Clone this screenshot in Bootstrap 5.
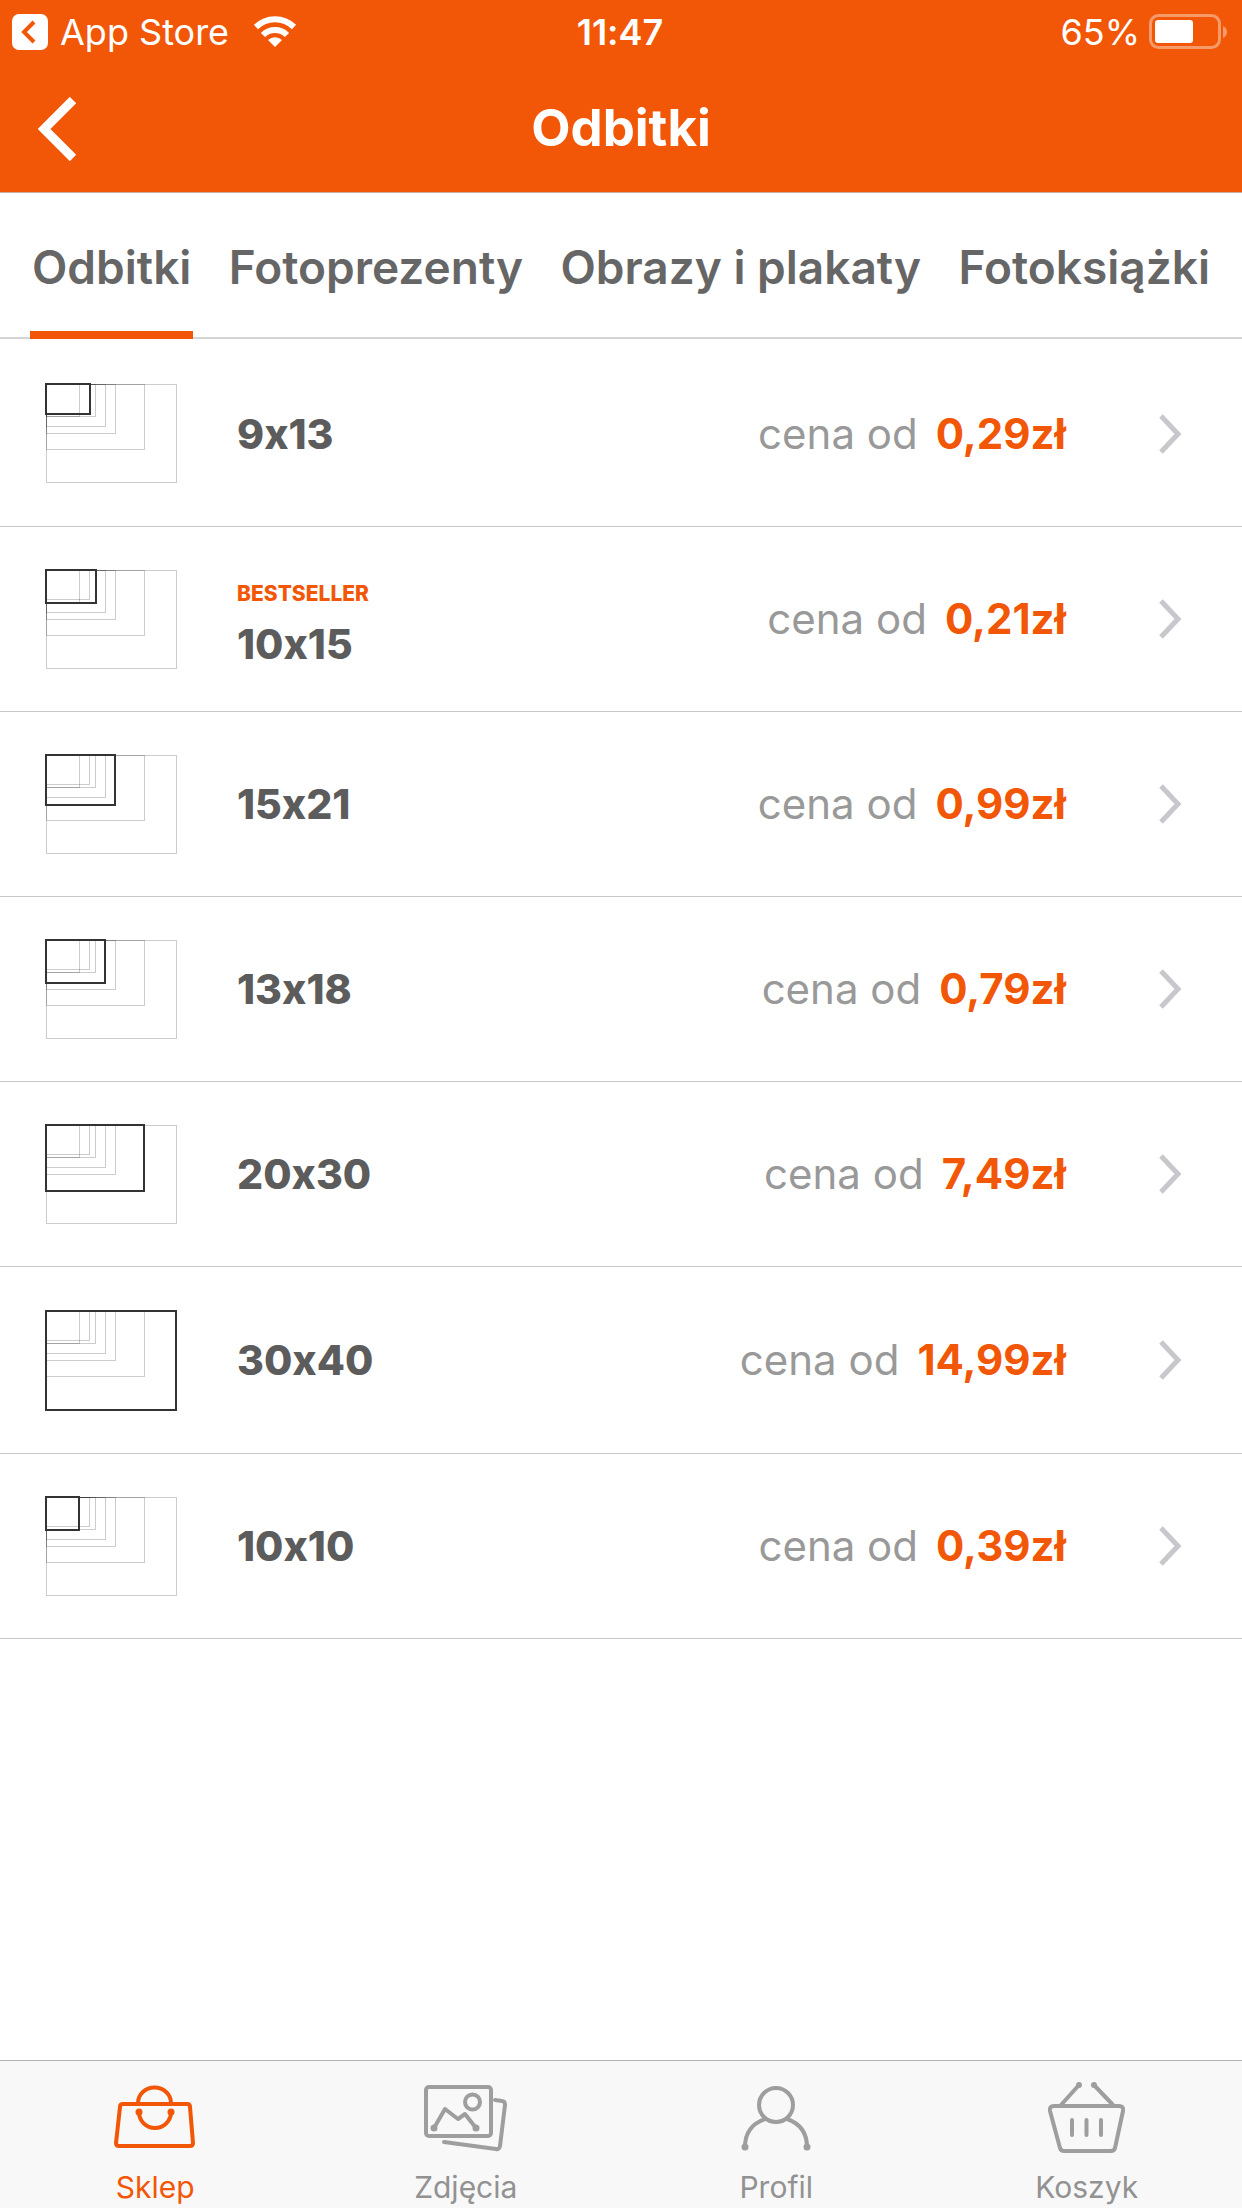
<!DOCTYPE html>
<html lang="pl">
<head>
<meta charset="utf-8">
<meta name="viewport" content="width=device-width, initial-scale=1">
<title>Odbitki</title>
<link rel="stylesheet" href="https://cdn.jsdelivr.net/npm/bootstrap@5.3.0/dist/css/bootstrap.min.css">
<style>
  :root { --brand: #f25708; --ink: #5c5c5c; --muted: #999; --rule: #c8c8c8; }
  body { font-family: Inter, "Noto Sans", sans-serif; font-variant-ligatures: no-contextual; color: var(--ink); background: #fff; }
  svg { display: block; flex: none; }
  a { text-decoration: none; }
  .app-top { background: var(--brand); border-bottom: 1px solid #c9b0a2; }
  .status-row { font-size: 36px; line-height: 64px; height: 64px; padding: 0 14px 0 12px; }
  .back-label { margin: 0 24px 0 12px; }
  .title-row { height: 128px; padding: 0 38px; }
  .title-row h1 { font-size: 51px; line-height: 60px; font-weight: 700; }
  .back-link { padding-top: 8px; }
  .side { flex: 1 1 0; }
  .tab-strip { height: 146px; padding: 0 30px; border-bottom: 2px solid #d4d4d4; }
  .tab-strip .nav-link { padding: 44px 2px 0; font-size: 46px; line-height: 60px; font-weight: 600; color: #666; height: 146px; }
  .tab-strip .nav-link.active { border-bottom: 8px solid var(--brand); }
  .size-row { height: 185px; padding: 0 60px 0 45px; border: 0; border-bottom: 1px solid var(--rule); color: var(--ink); }
  .size-row.first-row { height: 188px; padding-top: 2px; }
  .size-row.tall-row { height: 187px; }
  .size-name { font-size: 41px; line-height: 50px; font-weight: 800; padding-left: 59px; }
  .tag-line { font-size: 21px; line-height: 26px; font-weight: 800; color: var(--brand); padding: 12px 0; }
  .price-from { font-size: 42px; line-height: 50px; color: var(--muted); padding-right: 92px; gap: 18px; }
  .price-from strong { font-weight: 700; color: var(--brand); }
  .chev { color: #c7c7cc; }
  #formats rect { fill: none; stroke: #000; stroke-opacity: .2; }
  .thumb .picked { fill: none; stroke: #333; stroke-width: 2; }
  .dock { background: #f8f8f8; border-top: 1px solid #b0b4b0; height: 148px; }
  .dock a { color: #929292; font-size: 30px; line-height: 36px; padding-top: 21px; gap: 15px; }
  .dock svg { color: #9e9e9e; }
  .dock a.active, .dock a.active svg { color: var(--brand); }
  .dock svg { fill: none; stroke: currentColor; stroke-width: 4; stroke-linecap: round; stroke-linejoin: round; }
  .dock .dot { fill: currentColor; stroke: none; }
</style>
</head>
<body>
<svg width="0" height="0" class="position-absolute" aria-hidden="true">
  <symbol id="formats" viewBox="0 0 133 101">
    <rect x="1.5" y="1.5" width="33" height="32"/>
    <rect x="1.5" y="1.5" width="43" height="29"/>
    <rect x="1.5" y="1.5" width="49" height="32"/>
    <rect x="1.5" y="1.5" width="59" height="42"/>
    <rect x="1.5" y="1.5" width="69" height="49"/>
    <rect x="1.5" y="1.5" width="98" height="65"/>
    <rect x="1.5" y="1.5" width="130" height="98"/>
  </symbol>
  <symbol id="chevron" viewBox="0 0 24 42"><path d="M3 3l17 18L3 39" fill="none" stroke="currentColor" stroke-width="5"/></symbol>
</svg>

<div class="d-flex flex-column min-vh-100">
  <header class="app-top text-white">
    <div class="status-row d-flex align-items-center">
      <div class="side d-flex align-items-center">
        <svg width="36" height="36" viewBox="0 0 36 36"><rect width="36" height="36" rx="7" fill="#fff"/><path d="M22 8L12 18l10 10" fill="none" stroke="#f25708" stroke-width="4"/></svg>
        <span class="back-label">App Store</span>
        <svg width="44" height="32" viewBox="0 0 44 32"><g fill="none" stroke="#fff" stroke-width="6"><path d="M3 11a27 27 0 0 1 38 0"/><path d="M10 19a17 17 0 0 1 24 0"/></g><path d="M22 31l-7-7a10 10 0 0 1 14 0z" fill="#fff"/></svg>
      </div>
      <div class="fw-semibold">11:47</div>
      <div class="side d-flex align-items-center justify-content-end gap-2">
        <span>65%</span>
        <svg width="80" height="36" viewBox="0 0 80 36"><rect x="2.5" y="1.5" width="69" height="32" rx="8" fill="none" stroke="#fff" stroke-opacity=".4" stroke-width="3"/><rect x="7" y="6" width="38" height="23" rx="3" fill="#fff"/><path d="M75 12q4 2 4 6t-4 6z" fill="#fff" fill-opacity=".4"/></svg>
      </div>
    </div>
    <div class="title-row d-flex align-items-center">
      <div class="side"><a href="#" class="back-link text-white d-inline-block" aria-label="Wstecz"><svg width="40" height="64" viewBox="0 0 40 64"><path d="M35 3L6 32l29 29" fill="none" stroke="currentColor" stroke-width="9"/></svg></a></div>
      <h1 class="m-0">Odbitki</h1>
      <div class="side"></div>
    </div>
  </header>

  <nav class="nav tab-strip flex-nowrap justify-content-between text-nowrap">
    <a class="nav-link active" href="#">Odbitki</a>
    <a class="nav-link" href="#">Fotoprezenty</a>
    <a class="nav-link" href="#">Obrazy i plakaty</a>
    <a class="nav-link" href="#">Fotoksiążki</a>
  </nav>

  <main class="list-group list-group-flush flex-grow-1">
    <a href="#" class="size-row first-row d-flex align-items-center">
      <svg class="thumb" width="133" height="101"><use href="#formats"/><rect class="picked" x="1" y="1" width="44" height="30"/></svg>
      <div class="size-name">9x13</div>
      <div class="price-from d-flex ms-auto"><span>cena od</span><strong>0,29zł</strong></div>
      <svg class="chev" width="24" height="42"><use href="#chevron"/></svg>
    </a>
    <a href="#" class="size-row d-flex align-items-center">
      <svg class="thumb" width="133" height="101"><use href="#formats"/><rect class="picked" x="1" y="1" width="50" height="33"/></svg>
      <div class="size-name"><div class="tag-line">BESTSELLER</div>10x15</div>
      <div class="price-from d-flex ms-auto"><span>cena od</span><strong>0,21zł</strong></div>
      <svg class="chev" width="24" height="42"><use href="#chevron"/></svg>
    </a>
    <a href="#" class="size-row d-flex align-items-center">
      <svg class="thumb" width="133" height="101"><use href="#formats"/><rect class="picked" x="1" y="1" width="69" height="50"/></svg>
      <div class="size-name">15x21</div>
      <div class="price-from d-flex ms-auto"><span>cena od</span><strong>0,99zł</strong></div>
      <svg class="chev" width="24" height="42"><use href="#chevron"/></svg>
    </a>
    <a href="#" class="size-row d-flex align-items-center">
      <svg class="thumb" width="133" height="101"><use href="#formats"/><rect class="picked" x="1" y="1" width="59" height="43"/></svg>
      <div class="size-name">13x18</div>
      <div class="price-from d-flex ms-auto"><span>cena od</span><strong>0,79zł</strong></div>
      <svg class="chev" width="24" height="42"><use href="#chevron"/></svg>
    </a>
    <a href="#" class="size-row d-flex align-items-center">
      <svg class="thumb" width="133" height="101"><use href="#formats"/><rect class="picked" x="1" y="1" width="98" height="66"/></svg>
      <div class="size-name">20x30</div>
      <div class="price-from d-flex ms-auto"><span>cena od</span><strong>7,49zł</strong></div>
      <svg class="chev" width="24" height="42"><use href="#chevron"/></svg>
    </a>
    <a href="#" class="size-row tall-row d-flex align-items-center">
      <svg class="thumb" width="133" height="101"><use href="#formats"/><rect class="picked" x="1" y="1" width="130" height="99"/></svg>
      <div class="size-name">30x40</div>
      <div class="price-from d-flex ms-auto"><span>cena od</span><strong>14,99zł</strong></div>
      <svg class="chev" width="24" height="42"><use href="#chevron"/></svg>
    </a>
    <a href="#" class="size-row d-flex align-items-center">
      <svg class="thumb" width="133" height="101"><use href="#formats"/><rect class="picked" x="1" y="1" width="33" height="33"/></svg>
      <div class="size-name">10x10</div>
      <div class="price-from d-flex ms-auto"><span>cena od</span><strong>0,39zł</strong></div>
      <svg class="chev" width="24" height="42"><use href="#chevron"/></svg>
    </a>
  </main>

  <nav class="dock nav nav-fill flex-nowrap">
    <a href="#" class="nav-item active w-25 d-flex flex-column align-items-center">
      <svg width="90" height="72" viewBox="0 0 90 72"><path d="M13 22h64q3 0 3 3l3 36q0 3-3 3H9q-3 0-3-3l4-36q0-3 3-3z"/><path d="M28 21a16.500 15.500 0 0 1 33 0M29 30a16 16 0 0 0 32 0"/><circle class="dot" cx="29" cy="30" r="3.5"/><circle class="dot" cx="61" cy="30" r="3.5"/></svg>
      <span>Sklep</span>
    </a>
    <a href="#" class="nav-item w-25 d-flex flex-column align-items-center">
      <svg width="90" height="72" viewBox="0 0 90 72"><rect x="5" y="5" width="65" height="49" rx="3"/><circle cx="51.5" cy="20" r="7.5"/><path d="M13 46l11-19 13 10 7-5 11 14M74 18l7 1q3 0 3 4l-5 41q-1 4-4 3l-52-7"/><circle class="dot" cx="13" cy="46" r="3.5"/><circle class="dot" cx="55" cy="46" r="3.5"/></svg>
      <span>Zdjęcia</span>
    </a>
    <a href="#" class="nav-item w-25 d-flex flex-column align-items-center">
      <svg width="90" height="72" viewBox="0 0 90 72"><ellipse cx="45" cy="23" rx="17" ry="17"/><path d="M34 37Q14 44 14 65M56 37q20 7 20 28"/><circle class="dot" cx="14" cy="65" r="3.5"/><circle class="dot" cx="76" cy="65" r="3.5"/></svg>
      <span>Profil</span>
    </a>
    <a href="#" class="nav-item w-25 d-flex flex-column align-items-center">
      <svg width="90" height="72" viewBox="0 0 90 72"><path d="M12 24h65q5 0 4 5l-8 37q-1 3-4 3H22q-3 0-4-3L8 29q-1-5 4-5zM37 3L19 23M52 3l19 20M30 38v15M44.5 38v15M59 38v15"/><circle class="dot" cx="37" cy="3" r="3"/><circle class="dot" cx="52" cy="3" r="3"/></svg>
      <span>Koszyk</span>
    </a>
  </nav>
</div>
<script src="https://cdn.jsdelivr.net/npm/bootstrap@5.3.0/dist/js/bootstrap.bundle.min.js"></script>
</body>
</html>
